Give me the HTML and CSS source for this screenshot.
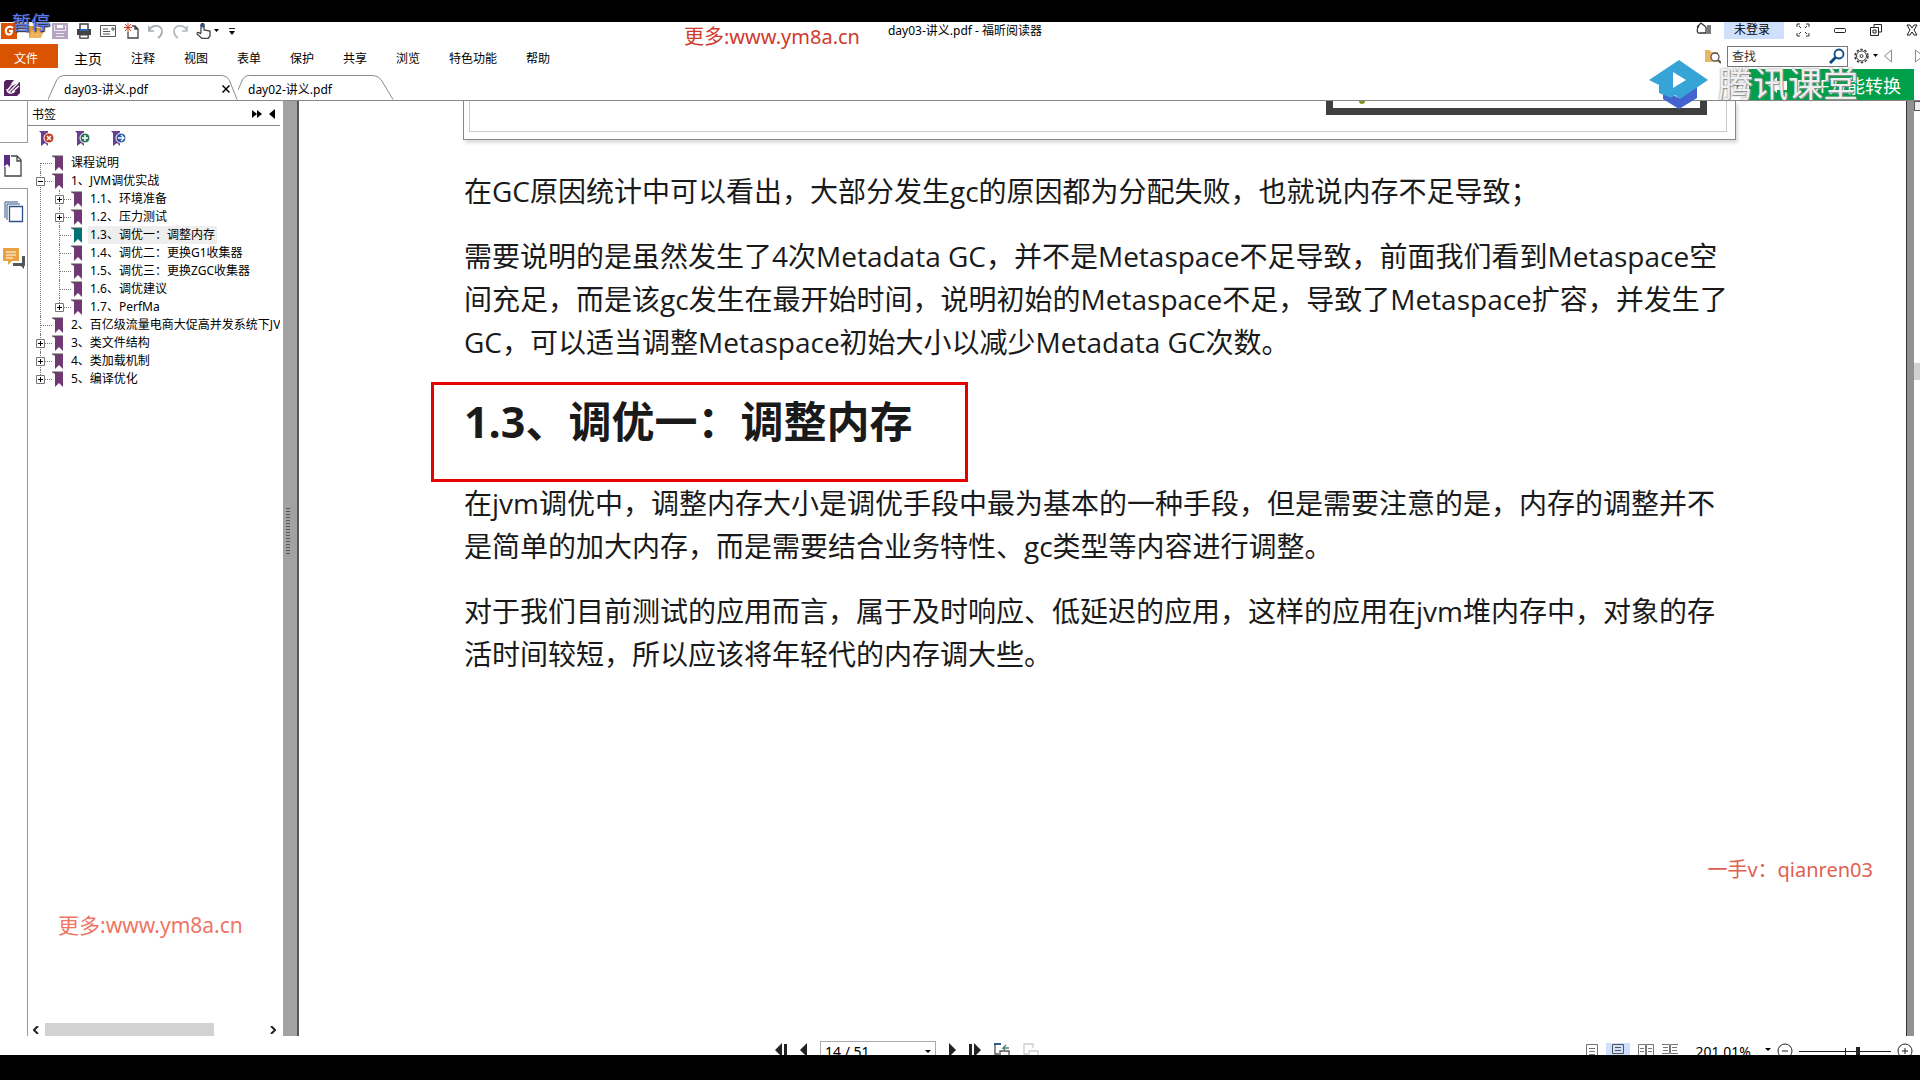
FILE: index.html
```
<!DOCTYPE html>
<html lang="zh-CN">
<head>
    <meta charset="utf-8">
    <title>day03-讲义.pdf - 福昕阅读器</title>
    <link rel="stylesheet" href="styles.css">
</head>
<body>
<svg class="defs" width="0" height="0" aria-hidden="true">
    <symbol id="mark" viewBox="0 0 14 17"><path d="M0 1h11v15l-4-4-4 4V3L0 1z" fill="currentColor"/><path d="M0 1h11" stroke="#555" fill="none"/></symbol>
    <symbol id="plus" viewBox="0 0 9 9"><path d="M.5.5h8v8h-8z" fill="#fff" stroke="#777"/><path d="M2 4.5h5M4.5 2v5" stroke="#000"/></symbol>
    <symbol id="minus" viewBox="0 0 9 9"><path d="M.5.5h8v8h-8z" fill="#fff" stroke="#777"/><path d="M2 4.5h5" stroke="#000"/></symbol>
</svg>
<div class="app">
    <header class="titlebar">
        <div class="quick">
            <svg class="logo" width="16" height="16" viewBox="0 0 16 16"><path d="M0 0h16v16H0z" fill="#d95300"/><path d="M12 5c-4-3-8 0-7 4s6 3 6-1H8" fill="none" stroke="#fff" stroke-width="2"/></svg>
            <svg width="16" height="16" viewBox="0 0 16 16"><path d="M1 3h5l2 2h5v9H1z" fill="#d99b3f"/><path d="M4 7h12l-3 8H1z" fill="#f0b45a"/></svg>
            <svg width="16" height="16" viewBox="0 0 16 16"><path d="M1 1h14v14H1zM4 1v5h8V1M3 15V9h10v6M4 12h8" fill="#eee8f2" stroke="#b5a5c2" stroke-width="2"/></svg>
            <svg width="16" height="16" viewBox="0 0 16 16"><path d="M4 6V1h8v5M4 11v4h8v-4" fill="#fff" stroke="#444" stroke-width="1.5"/><path d="M1 6h14v6H1z" fill="#444"/><path d="M4 7h8" stroke="#2a65b0" stroke-width="2"/><path d="M4 12h8v3H4z" fill="#fff" stroke="#444"/></svg>
            <svg width="16" height="16" viewBox="0 0 16 16"><path d="M.5 2.500h15v11H.5zM3 6h5M3 8.500h7M3 11h7M12 5h2v2h-2z" fill="none" stroke="#555"/></svg>
            <svg width="16" height="16" viewBox="0 0 16 16"><path d="M8 3h3l3 3v9H4V9M11 3v3h3" fill="none" stroke="#444" stroke-width="1.300"/><path d="M4 0v9M0 4.500h8M1 1l6 7M7 1L1 8" stroke="#c7401c"/></svg>
            <svg width="16" height="16" viewBox="0 0 16 16"><path d="M1 3v5h5M1 8c3-8 14-6 13 1-.5 3-2 5-4 6" fill="none" stroke="#a3aab3" stroke-width="1.700"/></svg>
            <svg width="16" height="16" viewBox="0 0 16 16"><path d="M15 3v5h-5M15 8C12 0 1 2 2 9c.5 3 2 5 4 6" fill="none" stroke="#b2b8bf" stroke-width="1.700"/></svg>
            <svg width="24" height="16" viewBox="0 0 24 16"><path d="M5 10V2c0-2 3-2 3 0v5l6 1v5l-2 2.500H6L1 11c0-2 2-2 4 0" fill="#fff" stroke="#444" stroke-width="1.300"/><circle cx="6.500" cy="2.500" r="2" fill="#245588"/><path d="M18 6h5l-2.500 3z"/></svg>
            <svg width="8" height="16" viewBox="0 0 8 16"><path d="M1 5.500h6" stroke="#222"/><path d="M1 8h6l-3 4z"/></svg>
        </div>
        <div class="doc-title">day03-讲义.pdf - 福昕阅读器</div>
        <div class="window-tools">
            <svg width="16" height="16" viewBox="0 0 16 16"><path d="M1 5l4-4 5 4M3 4c-3 3-2 8 1 7h6V5M12 3v9M14 3v9" fill="none" stroke="#333" stroke-width="1.300"/></svg>
            <button class="login">未登录</button>
            <svg width="14" height="14" viewBox="0 0 14 14"><path d="M1 4V1h3M10 1h3v3M1 10v3h3M10 13h3v-3M3 3l2 2M11 3L9 5M3 11l2-2M11 11L9 9" fill="none" stroke="#333"/></svg>
            <svg width="12" height="14" viewBox="0 0 12 14"><rect x=".5" y="5.500" width="11" height="4" rx="1" fill="#fff" stroke="#222"/></svg>
            <svg width="12" height="14" viewBox="0 0 12 14"><path d="M4 4V1.500h7.500V9H9M.5 4.500h8v8h-8zM3 7h3v3H3z" fill="none" stroke="#222"/></svg>
            <svg width="12" height="14" viewBox="0 0 12 14"><path d="M1 2h3l2 3 2-3h3L8 7l3 5H8L6 9l-2 3H1l3-5z" fill="#fff" stroke="#222"/></svg>
        </div>
    </header>

    <nav class="menubar">
        <button class="file">文件</button>
        <div class="menus">
            <button class="current">主页</button>
            <button>注释</button>
            <button>视图</button>
            <button>表单</button>
            <button>保护</button>
            <button>共享</button>
            <button>浏览</button>
            <button>特色功能</button>
            <button>帮助</button>
        </div>
        <div class="find">
            <svg width="16" height="16" viewBox="0 0 16 16"><path d="M0 2h5l1 2h7v10H0z" fill="#e8b765"/><circle cx="10" cy="9" r="4" fill="#fff" stroke="#555" stroke-width="1.300"/><path d="M13 12l3 3" stroke="#555" stroke-width="2"/></svg>
            <label class="searchbox">
                <input type="text" placeholder="查找" aria-label="查找">
                <svg width="16" height="16" viewBox="0 0 16 16"><circle cx="10" cy="6" r="4.500" fill="none" stroke="#0a4a86" stroke-width="1.800"/><path d="M7 9l-6 6" stroke="#0a4a86" stroke-width="3"/></svg>
            </label>
            <svg width="24" height="16" viewBox="0 0 24 16"><circle cx="7.500" cy="8" r="6.500" fill="none" stroke="#333" stroke-width="1.500" stroke-dasharray="2.500 1.600"/><circle cx="7.500" cy="8" r="5" fill="none" stroke="#333"/><circle cx="7.500" cy="8" r="1.500" fill="none" stroke="#333"/><path d="M19 6h5l-2.500 3z"/></svg>
            <svg width="8" height="14" viewBox="0 0 8 14"><path d="M7.500 1v12L.5 7z" fill="#fff" stroke="#888"/></svg>
            <svg class="next" width="5" height="14" viewBox="0 0 5 14"><path d="M.5 13V1L8 7z" fill="#fff" stroke="#888"/></svg>
        </div>
    </nav>

    <div class="tabbar">
        <svg class="sign" width="16" height="16" viewBox="0 0 16 16"><path d="M2 0h8L6 5l4-3-2 4 8-4v11l-3 3H0V2z" fill="#56215f"/><path d="M3 11L11 1M5 12l9-9M8 12l7-6M3 9c0 5 6 5 8 2" fill="none" stroke="#fff" stroke-width="1.300"/></svg>
        <div class="tab">
            <svg class="edge" viewBox="0 0 196 25" preserveAspectRatio="none"><path d="M0 24.500L9 5Q11 1 16 .5H180Q185 1 187 5L195 24.500" fill="#fff" stroke="#888"/></svg>
            <a href="#">day03-讲义.pdf</a>
            <button class="close" aria-label="关闭"><svg width="8" height="8" viewBox="0 0 8 8"><path d="M.5.5l7 7M7.500.5l-7 7" stroke="#000" stroke-width="1.500"/></svg></button>
        </div>
        <div class="tab second">
            <svg class="edge" viewBox="0 0 160 25" preserveAspectRatio="none"><path d="M0 15L4 6Q6 1 11 .5H139Q144 1 147 5L159 24.500" fill="none" stroke="#888"/></svg>
            <a href="#">day02-讲义.pdf</a>
        </div>
        <button class="tab-list" aria-label="标签列表"><svg width="8" height="5" viewBox="0 0 8 5"><path d="M0 0h8L4 5z"/></svg></button>
        <button class="convert"><svg width="20" height="16" viewBox="0 0 20 16"><path d="M0 8l9-8v4h10v9H9v3z" fill="#fff"/></svg>PDF万能转换</button>
    </div>

    <div class="workspace">
        <div class="rail">
            <div class="rail-top"></div>
            <button class="rail-on" aria-label="书签"><svg width="18" height="22" viewBox="0 0 18 22"><path d="M7 1h6l4 4v16H1V12M13 1v5h4" fill="none" stroke="#444" stroke-width="1.300"/><path d="M0 0h6v12L3 9l-3 3z" fill="#5b2d82"/></svg></button>
            <button aria-label="页面"><svg width="20" height="22" viewBox="0 0 20 22"><path d="M1 17V1h13M3 19V3h13" fill="none" stroke="#2a5288" stroke-width="1"/><path d="M5.500 5.500h13v15h-13z" fill="#fff" stroke="#2a5288" stroke-width="1.300"/></svg></button>
            <button aria-label="注释"><svg width="22" height="21" viewBox="0 0 22 21"><path d="M19 8h3v10h-1v3l-3-3h-8v-3h9z" fill="#555"/><path d="M0 0h16v13H9l-4 4v-4H0z" fill="#e9a23f"/><path d="M3 4h10M3 7h10M3 10h7" stroke="#fff"/></svg></button>
        </div>
        <aside class="panel">
            <div class="panel-head">
                <span>书签</span>
                <svg width="24" height="10" viewBox="0 0 24 10"><path d="M0 1l5 4-5 4zM5 1l5 4-5 4zM23 0v10l-6-5z"/></svg>
            </div>
            <div class="panel-body">
                <div class="mark-tools">
                    <button aria-label="删除书签"><svg width="16" height="17" viewBox="0 0 16 17"><path d="M0 1h9v15l-3-3-4 3V3z" fill="#6a3f92"/><circle cx="10" cy="8" r="5" fill="#c33c1d" stroke="#fff"/><path d="M8 6l4 4M12 6l-4 4" stroke="#fff" stroke-width="1.500"/></svg></button>
                    <button aria-label="添加书签"><svg width="16" height="17" viewBox="0 0 16 17"><path d="M0 1h9v15l-3-3-4 3V3z" fill="#6a3f92"/><circle cx="10" cy="8" r="5" fill="#2c7457" stroke="#fff"/><path d="M7 8h6M10 5v6" stroke="#fff" stroke-width="1.500"/></svg></button>
                    <button aria-label="展开书签"><svg width="16" height="17" viewBox="0 0 16 17"><path d="M0 1h9v15l-3-3-4 3V3z" fill="#6a3f92"/><circle cx="10" cy="8" r="5" fill="#2659a0" stroke="#fff"/><path d="M7 8h5M10 5l3 3-3 3" fill="none" stroke="#fff" stroke-width="1.300"/></svg></button>
                </div>
                <ul class="tree">
                    <li><div class="row"><i></i><svg class="mark"><use href="#mark"/></svg><a href="#">课程说明</a></div></li>
                    <li>
                        <div class="row"><i></i><svg class="box"><use href="#minus"/></svg><svg class="mark"><use href="#mark"/></svg><a href="#">1、JVM调优实战</a></div>
                        <ul>
                            <li><div class="row"><i></i><svg class="box"><use href="#plus"/></svg><svg class="mark"><use href="#mark"/></svg><a href="#">1.1、环境准备</a></div></li>
                            <li><div class="row"><i></i><svg class="box"><use href="#plus"/></svg><svg class="mark"><use href="#mark"/></svg><a href="#">1.2、压力测试</a></div></li>
                            <li><div class="row on"><i></i><svg class="mark"><use href="#mark"/></svg><a href="#">1.3、调优一：调整内存</a></div></li>
                            <li><div class="row"><i></i><svg class="mark"><use href="#mark"/></svg><a href="#">1.4、调优二：更换G1收集器</a></div></li>
                            <li><div class="row"><i></i><svg class="mark"><use href="#mark"/></svg><a href="#">1.5、调优三：更换ZGC收集器</a></div></li>
                            <li><div class="row"><i></i><svg class="mark"><use href="#mark"/></svg><a href="#">1.6、调优建议</a></div></li>
                            <li><div class="row"><i></i><svg class="box"><use href="#plus"/></svg><svg class="mark"><use href="#mark"/></svg><a href="#">1.7、PerfMa</a></div></li>
                        </ul>
                    </li>
                    <li><div class="row"><i></i><svg class="mark"><use href="#mark"/></svg><a href="#">2、百亿级流量电商大促高并发系统下JV</a></div></li>
                    <li><div class="row"><i></i><svg class="box"><use href="#plus"/></svg><svg class="mark"><use href="#mark"/></svg><a href="#">3、类文件结构</a></div></li>
                    <li><div class="row"><i></i><svg class="box"><use href="#plus"/></svg><svg class="mark"><use href="#mark"/></svg><a href="#">4、类加载机制</a></div></li>
                    <li><div class="row"><i></i><svg class="box"><use href="#plus"/></svg><svg class="mark"><use href="#mark"/></svg><a href="#">5、编译优化</a></div></li>
                </ul>
                <div class="hscroll">
                    <svg width="6" height="8" viewBox="0 0 6 8"><path d="M5 0L1 4l4 4" fill="none" stroke="#222" stroke-width="2"/></svg>
                    <div class="track"><div class="thumb"></div></div>
                    <svg width="6" height="8" viewBox="0 0 6 8"><path d="M1 0l4 4-4 4" fill="none" stroke="#222" stroke-width="2"/></svg>
                </div>
            </div>
        </aside>
        <div class="splitter"><span></span></div>
        <main class="page">
            <div class="figure">
                <div class="figure-inner">
                    <div class="shot"><span></span></div>
                </div>
            </div>
            <article>
                <p>在GC原因统计中可以看出，大部分发生gc的原因都为分配失败，也就说内存不足导致；</p>
                <p>需要说明的是虽然发生了4次Metadata GC，并不是Metaspace不足导致，前面我们看到Metaspace空<br>间充足，而是该gc发生在最开始时间，说明初始的Metaspace不足，导致了Metaspace扩容，并发生了<br>GC，可以适当调整Metaspace初始大小以减少Metadata GC次数。</p>
                <h1>1.3、调优一：调整内存</h1>
                <p>在jvm调优中，调整内存大小是调优手段中最为基本的一种手段，但是需要注意的是，内存的调整并不<br>是简单的加大内存，而是需要结合业务特性、gc类型等内容进行调整。</p>
                <p>对于我们目前测试的应用而言，属于及时响应、低延迟的应用，这样的应用在jvm堆内存中，对象的存<br>活时间较短，所以应该将年轻代的内存调大些。</p>
            </article>
        </main>
        <div class="edge-bar"></div>
        <div class="vscroll"><div class="knob"></div><span></span></div>
    </div>

    <footer class="status">
        <div class="pager">
            <svg width="12" height="14" viewBox="0 0 12 14"><path d="M7 0v14L0 7zM9 1h3v12H9z" fill="#222"/></svg>
            <svg width="7" height="14" viewBox="0 0 7 14"><path d="M7 0v14L0 7z" fill="#222"/></svg>
            <label class="page-no"><input type="text" value="14 / 51" aria-label="页码"><svg width="6" height="4" viewBox="0 0 6 4"><path d="M0 0h6L3 3z"/></svg></label>
            <svg width="7" height="14" viewBox="0 0 7 14"><path d="M0 0v14l7-7z" fill="#222"/></svg>
            <svg width="12" height="14" viewBox="0 0 12 14"><path d="M5 0v14l7-7zM0 1h3v12H0z" fill="#222"/></svg>
            <svg width="16" height="16" viewBox="0 0 16 16"><path d="M5 11H1V1h6M6 8h9v7H6z" fill="none" stroke="#555" stroke-width="1.300"/><path d="M0 1h7" stroke="#2a5a95" stroke-width="2"/><path d="M15 5H9l3-3M9 5l2 2" fill="none" stroke="#3f8378" stroke-width="1.300"/></svg>
            <svg width="16" height="16" viewBox="0 0 16 16"><path d="M5 11H1V1h9v4M6 8h9v7H6z" fill="none" stroke="#ccc" stroke-width="1.300"/></svg>
        </div>
        <div class="views">
            <button aria-label="单页"><svg width="12" height="14" viewBox="0 0 12 14"><path d="M.5.5h11v14H.5zM3 4.500h6M3 7.500h6M3 10.500h6" fill="none" stroke="#777"/></svg></button>
            <button class="chosen" aria-label="连续"><svg width="12" height="14" viewBox="0 0 12 14"><path d="M.5.5h11v9H.5zM3 3.500h6M3 6.500h6M.5 14v-2h11v2" fill="none" stroke="#555"/></svg></button>
            <button aria-label="双页"><svg width="16" height="14" viewBox="0 0 16 14"><path d="M.5.5h7v14h-7zM8.500.5h7v14h-7zM2 4.500h4M2 7.500h4M10 4.500h4M10 7.500h4" fill="none" stroke="#777"/></svg></button>
            <button aria-label="连续双页"><svg width="16" height="14" viewBox="0 0 16 14"><path d="M0 .5h7.500v9H0M16 .5H8.500v9H16M1 3.500h5M1 6.500h5M10 3.500h5M10 6.500h5" fill="none" stroke="#777"/></svg></button>
        </div>
        <div class="zoom">
            <span class="percent">201.01%</span>
            <svg class="caret" width="6" height="14" viewBox="0 0 6 14"><path d="M0 5h6L3 8z"/></svg>
            <svg width="16" height="16" viewBox="0 0 16 16"><circle cx="8" cy="8" r="7" fill="none" stroke="#222"/><path d="M5 8h6" stroke="#222"/></svg>
            <svg width="92" height="16" viewBox="0 0 92 16"><path d="M0 8.500h92M46.500 5v8" stroke="#222"/><path d="M57 4h4v12h-4z" fill="#222"/></svg>
            <svg width="16" height="16" viewBox="0 0 16 16"><circle cx="8" cy="8" r="7" fill="none" stroke="#222"/><path d="M5 8h6M8 5v6" stroke="#222"/></svg>
        </div>
    </footer>
</div>

<!-- overlays of the video player -->
<div class="paused">暂停</div>
<div class="promo promo-top">更多:www.ym8a.cn</div>
<div class="promo promo-left">更多:www.ym8a.cn</div>
<div class="contact">一手v：qianren03</div>
<div class="brand">
    <svg width="60" height="50" viewBox="0 0 60 50"><path d="M14 30v9l16 10 18-11V27L30 38z" fill="#4463cf"/><path d="M30 0l29 20-28 19-5-4-4 3-12-5V25L0 20z" fill="#36a4d6"/><path d="M24 12v16l13-8z" fill="#fff"/></svg>
    <span>腾讯课堂</span>
</div>
</body>
</html>
```

FILE: styles.css
```
* {
    box-sizing: border-box;
}

body {
    margin: 0;
    height: 100vh;
    padding: 22px 0 25px;
    background: #000;
    color: #000;
    font-family: "Noto Sans", "Noto Sans CJK SC", sans-serif;
    font-size: 12px;
    overflow: hidden;
    position: relative;
}

button, input {
    font: inherit;
    color: inherit;
    border: 0;
    padding: 0;
    margin: 0;
    background: none;
}

a {
    color: inherit;
    text-decoration: none;
}

svg {
    display: block;
    flex: none;
}

.defs {
    position: absolute;
}

.app {
    height: 100%;
    background: #fff;
    display: flex;
    flex-direction: column;
    overflow: hidden;
}

/* title bar */

.titlebar {
    height: 22px;
    flex: none;
    display: grid;
    grid-template-columns: 1fr auto 1fr;
    line-height: 18px;
}

.quick {
    display: flex;
    gap: 8px;
    align-items: center;
    height: 18px;
    padding-left: 1px;
}

.quick .logo {
    margin-right: 3px;
}

.doc-title {
    padding-left: 10px;
}

.window-tools {
    display: flex;
    justify-content: flex-end;
    gap: 24px;
    height: 16px;
    align-items: center;
    padding-right: 2px;
}

.window-tools > svg:first-child {
    margin-right: -12px;
}

.login {
    width: 60px;
    height: 17px;
    line-height: 16px;
    padding-right: 4px;
    background: #cfe0fc;
    margin-right: -12px;
}

/* menu */

.menubar {
    height: 24px;
    flex: none;
    display: flex;
    align-items: center;
}

.file {
    width: 58px;
    height: 24px;
    padding: 4px 6px 0 0;
    background: #d95300;
    color: #fff;
}

.menus {
    display: flex;
    align-items: center;
    gap: 29px;
    margin-left: 16px;
    padding-top: 4px;
    flex: 1;
}

.menus .current {
    font-size: 14px;
}

.find {
    display: flex;
    align-items: center;
    gap: 6px;
}

.searchbox {
    display: flex;
    align-items: center;
    width: 121px;
    height: 21px;
    border: 1px solid #777;
    padding: 0 2px 0 4px;
}

.searchbox input {
    flex: 1;
    min-width: 0;
    outline: 0;
}

.searchbox input::placeholder {
    color: #333;
}

.find .next {
    margin-left: 17px;
}

/* document tabs */

.tabbar {
    height: 33px;
    flex: none;
    display: flex;
    align-items: flex-end;
    border-bottom: 1px solid #888;
    padding-right: 6px;
}

.sign {
    margin: 0 28px 4px 4px;
}

.tab {
    position: relative;
    width: 190px;
    height: 25px;
    padding: 3px 8px 0 16px;
    display: flex;
    align-items: center;
    justify-content: space-between;
}

.tab.second {
    width: 156px;
    padding-left: 10px;
}

.edge {
    position: absolute;
    left: 0;
    top: 0;
    width: 100%;
    height: 100%;
}

.tab a, .tab button {
    position: relative;
}

.tab-list {
    margin: 0 8px 12px auto;
}

.convert {
    width: 165px;
    height: 31px;
    background: #00a04a;
    color: #fff;
    font-size: 18px;
    display: flex;
    align-items: center;
    justify-content: flex-end;
    gap: 8px;
    padding-right: 13px;
    white-space: nowrap;
}

/* workspace */

.workspace {
    flex: 1;
    min-height: 0;
    display: flex;
}

.rail {
    width: 28px;
    display: flex;
    flex-direction: column;
    border-right: 1px solid #999;
}

.rail-top {
    height: 42px;
    border-bottom: 1px solid #999;
}

.rail button {
    height: 46px;
    display: flex;
    align-items: center;
    justify-content: center;
}

.rail .rail-on {
    width: 28px;
    padding-right: 2px;
    background: #fff;
    border-bottom: 1px solid #999;
}

.panel {
    width: 255px;
    display: flex;
    flex-direction: column;
    padding-right: 3px;
}

.panel-head {
    height: 25px;
    display: flex;
    align-items: center;
    justify-content: space-between;
    padding: 2px 4px 0 4px;
    border-bottom: 1px solid #888;
}

.panel-body {
    flex: 1;
    min-height: 0;
    display: flex;
    flex-direction: column;
}

.mark-tools {
    display: flex;
    align-items: flex-start;
    gap: 20px;
    padding: 4px 0 0 11px;
    height: 28px;
}

.tree, .tree ul {
    list-style: none;
    margin: 0;
    padding: 0;
}

.tree {
    flex: 1;
    padding-left: 12px;
    overflow: hidden;
}

.tree ul {
    padding-left: 19px;
}

.tree li {
    position: relative;
}

.tree li::before {
    content: "";
    position: absolute;
    left: 0;
    top: 0;
    bottom: 0;
    border-left: 1px dotted #777;
}

.tree > li:first-child::before {
    top: 9px;
}

.tree li:last-child::before {
    bottom: auto;
    height: 9px;
}

.row {
    position: relative;
    height: 18px;
    line-height: 18px;
    display: flex;
    align-items: center;
    white-space: nowrap;
}

.row i {
    width: 12px;
    flex: none;
    border-top: 1px dotted #777;
}

.row .box {
    position: absolute;
    left: -4px;
    width: 9px;
    height: 9px;
}

.mark {
    width: 14px;
    height: 17px;
    color: #713974;
}

.row a {
    margin-left: 3px;
    padding: 0 2px;
}

.on .mark {
    color: #007474;
}

.on a {
    background: #eee;
}

.hscroll {
    display: flex;
    align-items: center;
    gap: 6px;
    padding: 0 4px 0 5px;
    height: 13px;
}

.track {
    flex: 1;
    height: 13px;
}

.thumb {
    width: 77%;
    height: 100%;
    background: #d2d2d2;
}

.splitter {
    width: 16px;
    background: #a2a2a2;
    border-right: 2px solid #555;
    display: flex;
    align-items: center;
    justify-content: center;
}

.splitter span {
    width: 4px;
    height: 46px;
    margin: 0 4px 76px 0;
    background: repeating-linear-gradient(#555 0 1px, #a2a2a2 1px 3px);
}

/* document page */

.page {
    flex: 1;
    min-width: 0;
    padding-left: 164px;
    overflow: hidden;
}

.figure {
    width: 1273px;
    max-width: 100%;
    height: 39px;
    border: 1px solid #888;
    border-top: 0;
    padding: 0 8px 7px 5px;
    box-shadow: 2px 3px 3px #ddd;
}

.figure-inner {
    height: 100%;
    border: 1px solid #ccc;
    border-top: 0;
    display: flex;
    justify-content: flex-end;
    padding-right: 19px;
}

.shot {
    width: 381px;
    height: 14px;
    border: 7px solid #3f3f3f;
    border-top: 0;
}

.shot span {
    display: block;
    width: 6px;
    height: 3px;
    margin-left: 26px;
    background: #7f9622;
    border-radius: 0 0 3px 3px;
}

article {
    font-family: "Open Sans", "Noto Sans CJK SC", sans-serif;
    font-size: 28px;
    line-height: 43px;
    color: #1a1a1a;
    white-space: nowrap;
    padding: 30px 0 0 1px;
}

article p {
    margin: 0 0 22px;
}

article h1 {
    width: 537px;
    height: 100px;
    margin: -4px 0 0 -33px;
    padding: 7px 0 0 30px;
    border: 3px solid #e60000;
    font-size: 43px;
    line-height: 60px;
    font-weight: bold;
}

.edge-bar {
    width: 8px;
    background: #929292;
    border-left: 1px solid #333;
}

.vscroll {
    width: 6px;
}

.knob {
    height: 10px;
    border: 1px solid #555;
    border-right: 0;
    background: #eee;
}

.vscroll span {
    display: block;
    height: 17px;
    margin-top: 252px;
    background: #d2d2d2;
}

/* status bar, cut off by the lower edge */

.status {
    height: 19px;
    flex: none;
    display: flex;
    align-items: flex-start;
    overflow: hidden;
    padding: 7px 7px 0 40%;
}

.pager {
    display: flex;
    align-items: flex-start;
    gap: 13px;
    padding-left: 7px;
    margin-right: auto;
}

.page-no {
    display: flex;
    align-items: center;
    width: 116px;
    height: 22px;
    margin-top: -2px;
    border: 1px solid #aaa;
    padding: 0 4px;
}

.page-no input {
    flex: 1;
    min-width: 0;
    height: 20px;
    line-height: 20px;
    font-size: 14px;
}

.views {
    display: flex;
    gap: 8px;
    margin-right: 18px;
}

.views button {
    height: 16px;
}

.views .chosen {
    width: 24px;
    padding-left: 6px;
    background: #cfe0fc;
}

.zoom {
    display: flex;
    gap: 6px;
}

.percent {
    font-size: 14px;
    line-height: 18px;
}

.caret {
    margin-left: 8px;
}

/* overlays */

.paused {
    position: absolute;
    left: 12px;
    top: 10px;
    font-size: 19px;
    line-height: 26px;
    color: #5b7cf0;
    text-shadow: 1px 1px 1px #223, 0 0 2px #223;
}

.promo {
    position: absolute;
    white-space: nowrap;
    font-size: 20px;
    line-height: 28px;
    color: #cf3a2c;
}

.promo-top {
    left: 684px;
    top: 23px;
}

.promo-left {
    left: 58px;
    bottom: 141px;
    font-size: 21px;
    color: #f07565;
}

.contact {
    position: absolute;
    right: 47px;
    top: 856px;
    font-size: 20px;
    line-height: 28px;
    color: #e0604f;
}

.brand {
    position: absolute;
    right: 62px;
    top: 60px;
    display: flex;
    gap: 9px;
    font-size: 35px;
    line-height: 48px;
    color: rgba(255, 255, 255, .9);
    text-shadow: 0 0 2px #777, 1px 1px 1px #999;
}
```
